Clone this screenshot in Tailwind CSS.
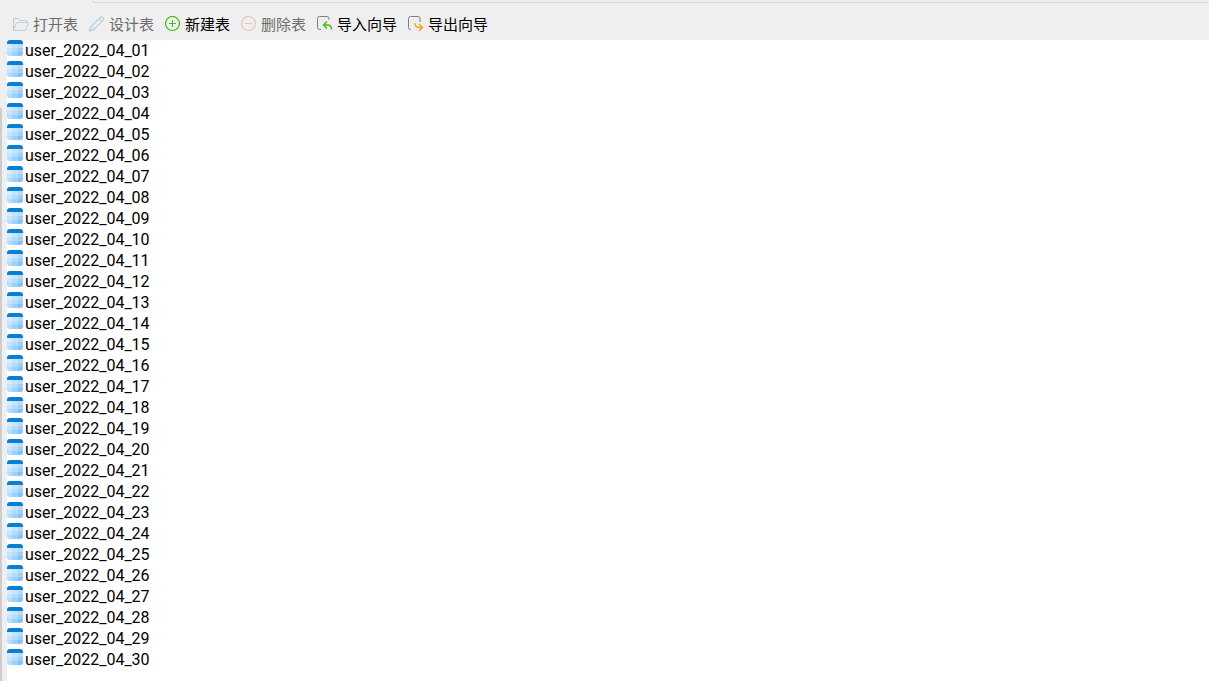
<!DOCTYPE html>
<html lang="zh-CN">
<head>
    <meta charset="UTF-8">
    <meta name="viewport" content="width=device-width, initial-scale=1.0">
    <title>user tables</title>
    <script src="https://cdn.jsdelivr.net/npm/@tailwindcss/browser@4"></script>
</head>
<body class="h-screen overflow-hidden flex flex-col bg-[#efefef] text-black font-['Noto_Sans','Noto_Sans_CJK_SC',sans-serif]">
    <!-- Bottom edge of the tab bar -->
    <div class="h-[3px] shrink-0 flex pl-[93px]">
        <div class="w-[307px] border-l border-b border-[#d9d9d9] bg-[#f2f2f2]"></div>
        <div class="grow border-b border-[#d9d9d9]"></div>
    </div>

    <!-- Toolbar -->
    <nav class="h-[37px] shrink-0 flex items-center gap-[11px] pl-3 pt-[5px] text-[15px] leading-5">
        <button class="flex items-center gap-1 text-[#6d6d6d]" disabled>
            <svg class="w-[17px] h-4" viewBox="0 0 17 16" fill="none">
                <path d="M1.5 14V2.5h5l1.5 2h6.5V6.5" stroke="#c6c6c6"/>
                <path d="M1.5 14.5 4.5 6.5h12l-3 8z" stroke="#b5d0e4"/>
            </svg>
            打开表
        </button>
        <button class="flex items-center gap-1 text-[#6d6d6d]" disabled>
            <svg class="w-4 h-4" viewBox="0 0 16 16" fill="none" stroke="#b5cfe3">
                <path d="M.5 15 1.5 11 11.500 1.300q1-.8 2 .2l.7.7q.8 1-.2 2L4.500 14z" stroke-width="1.2"/>
                <path d="m10 3 2.700 2.700M1.500 11l3 3" stroke="#c6c6c6"/>
            </svg>
            设计表
        </button>
        <button class="flex items-center gap-1">
            <svg class="w-4 h-4" viewBox="0 0 16 16" fill="none" stroke="#43bd12">
                <circle cx="7.5" cy="7.5" r="7" stroke-width="1.2"/>
                <path d="M4 7.5h7M7.5 4v7"/>
            </svg>
            新建表
        </button>
        <button class="flex items-center gap-1 text-[#6d6d6d]" disabled>
            <svg class="w-4 h-4" viewBox="0 0 16 16" fill="none" stroke="#e6c3c3">
                <circle cx="7.5" cy="7.5" r="7" stroke-width="1.2"/>
                <path d="M4 7.5h7"/>
            </svg>
            删除表
        </button>
        <button class="flex items-center gap-1">
            <svg class="w-4 h-4" viewBox="0 0 16 16" fill="none">
                <path d="M4 13.5H2.5q-2 0-2-2v-9q0-2 2-2H10q2 0 2 2V4" stroke="#808080"/>
                <path d="M10 5.500 6.500 9l3.500 3.500M6.500 9h4q4 0 4 4.500" stroke="#43bd12" stroke-width="1.4"/>
            </svg>
            导入向导
        </button>
        <button class="flex items-center gap-1">
            <svg class="w-4 h-4" viewBox="0 0 16 16" fill="none">
                <path d="M3 13.5H2.5q-2 0-2-2v-9q0-2 2-2H10q2 0 2 2V6" stroke="#808080"/>
                <path d="M11 8 14.500 11.500 11 15M14.500 11.500H11q-4 0-4-4.500" stroke="#f5a11c" stroke-width="1.4"/>
            </svg>
            导出向导
        </button>
    </nav>

    <!-- Table list -->
    <main class="grow min-h-0 flex">
        <div class="w-[7px] shrink-0 pt-[68px]">
            <div class="w-[2px] h-full bg-[#cdcdcd]"></div>
        </div>
        <ul id="tableList" class="grow bg-white font-['Roboto',sans-serif]"></ul>
    </main>

    <template id="tableRow">
        <li class="h-[21px] flex items-start gap-[2px]">
            <svg class="w-4 h-4 shrink-0" viewBox="0 0 16 16">
                <path d="M0 4h16v9q0 3-3 3H3q-3 0-3-3z" fill="#b4dcff"/>
                <path d="M0 4h5v4H0z" fill="#d6ecff"/>
                <path d="M5 4h6v4H5zM0 8h5v4H0z" fill="#c6e4ff"/>
                <path d="M11 8h5v4h-5zM5 12h6v4H5z" fill="#9bd0ff"/>
                <path d="M11 12h5v1q0 3-3 3h-2z" fill="#82c4ff"/>
                <path d="M0 4V3q0-3 3-3h10q3 0 3 3v1z" fill="#0a7ed0"/>
            </svg>
            <span class="text-base leading-[21px]"></span>
        </li>
    </template>

    <script>
        const list = document.getElementById('tableList');
        const row = document.getElementById('tableRow');

        // One table per day of April
        for (let day = 1; day <= 30; day++) {
            const item = row.content.cloneNode(true);
            item.querySelector('span').textContent = `user_2022_04_${String(day).padStart(2, '0')}`;
            list.appendChild(item);
        }
    </script>
</body>
</html>
